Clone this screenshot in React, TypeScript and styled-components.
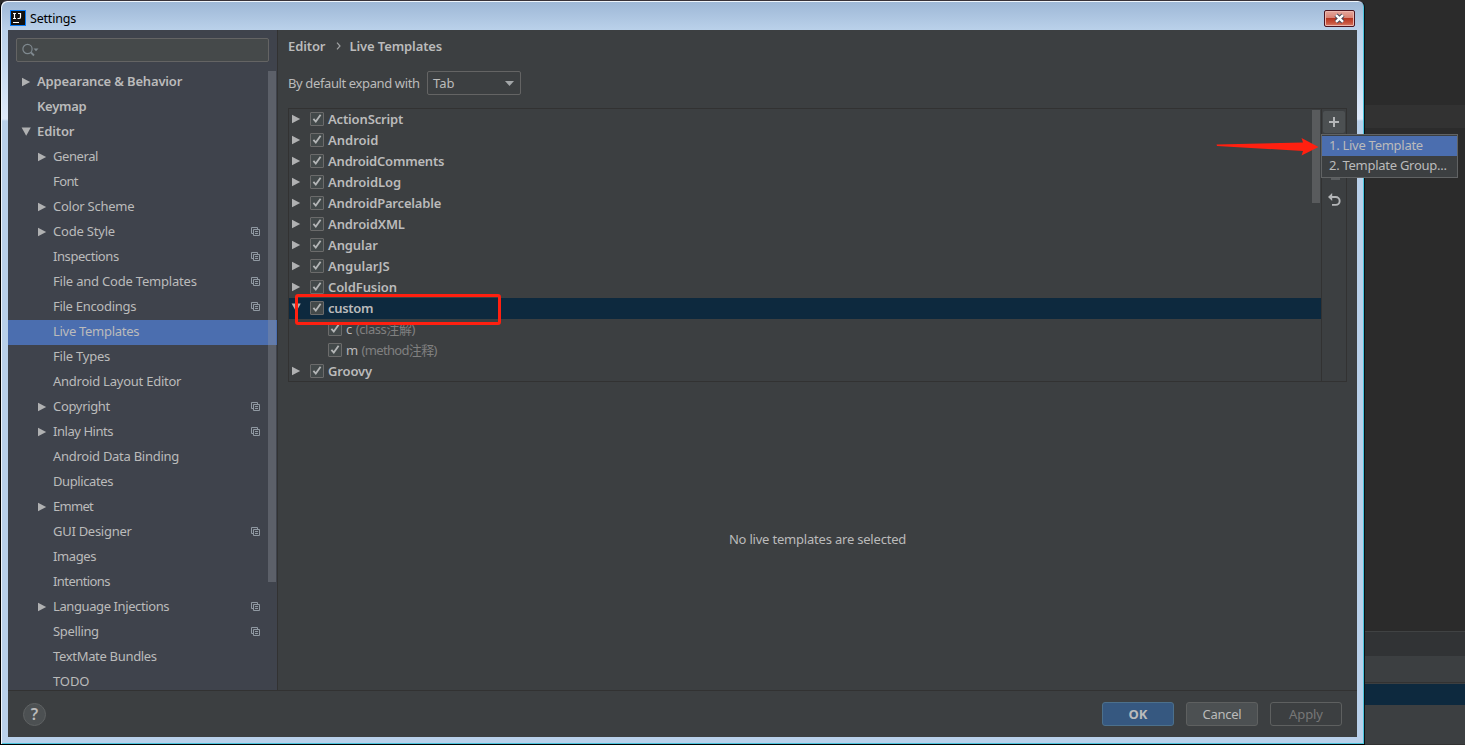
import React from "react";
import styled, { createGlobalStyle, css } from "styled-components";

const Global = createGlobalStyle`
  *, *::before, *::after { box-sizing: border-box; }
  html, body { margin: 0; padding: 0; overflow: hidden; background: #2b2b2b; }
  body { font: 13px/20px "Noto Sans", "Noto Sans CJK SC", sans-serif; color: #bbbbbb; }
`;

const Desktop = styled.div`
  width: 1465px;
  height: 745px;
  display: flex;
  position: relative;
  overflow: hidden;
  background: #2b2b2b;
`;

const Window = styled.div`
  width: 1365px;
  height: 745px;
  flex: none;
  display: flex;
  flex-direction: column;
  padding: 0 7px 7px;
  border: 1px solid #000;
  border-right-color: #0a1015;
  border-top-color: #383238;
  border-radius: 7px 7px 0 0;
  background: linear-gradient(#9db7d5 0, #a5bedb 8px, #bad1ea 29px, #bad1ea 30px, #c4d8ee 60px, #dfeafa 118px, #b9d0ea 120px);
  box-shadow: inset 1px 1px 0 #eff5fb, inset -1px -1px 0 #4ac4dd;
`;

const TitleBar = styled.div`
  height: 29px;
  flex: none;
  display: flex;
  align-items: center;
  padding: 5px 2px 0 2px;
  gap: 4px;
  color: #000;
  font: 12.5px/20px "Noto Sans", sans-serif;
`;

const TitleText = styled.span`
  flex: 1;
  padding-top: 2px;
  letter-spacing: -0.2px;
`;

const CloseButton = styled.div`
  width: 31px;
  height: 17px;
  margin-top: 1px;
  display: flex;
  align-items: center;
  justify-content: center;
  border: 1px solid #4b1420;
  border-radius: 2px;
  background: linear-gradient(#e5a79d 0, #d98375 45%, #b73622 50%, #c8553e 80%, #d9806c 100%);
  box-shadow: inset 0 0 0 1px #edb7ae;
`;

const Body = styled.div`
  flex: 1;
  min-height: 0;
  display: flex;
  background: #3c3f41;
`;

const Sidebar = styled.div`
  width: 270px;
  flex: none;
  display: flex;
  flex-direction: column;
  background: #3f434c;
  border-right: 1px solid #323232;
  overflow: hidden;
`;

const Search = styled.div`
  height: 24px;
  flex: none;
  margin: 8px 8px;
  padding-left: 5px;
  display: flex;
  align-items: center;
  border: 1px solid #646464;
  border-radius: 2px;
  background: #45494a;
`;

const Tree = styled.div`
  flex: 1;
  min-height: 0;
  overflow: hidden;
  position: relative;
`;

const ScrollThumb = styled.div<{ $top: number; $height: number; $color: string }>`
  position: absolute;
  top: ${(p) => p.$top}px;
  right: 1px;
  width: 8px;
  height: ${(p) => p.$height}px;
  background: ${(p) => p.$color};
`;

const TreeRow = styled.div<{ $level: number; $selected?: boolean }>`
  height: 25px;
  display: flex;
  align-items: center;
  padding: 0 17px 2px ${(p) => 13 + p.$level * 16}px;
  ${(p) => p.$selected && css`background: #4b6eaf;`}
`;

const ArrowSlot = styled.span`
  width: 16px;
  flex: none;
  display: flex;
`;

const Label = styled.span<{ $bold?: boolean; $spacing?: number }>`
  flex: 1;
  white-space: nowrap;
  font-weight: ${(p) => (p.$bold ? 600 : 400)};
  letter-spacing: ${(p) => p.$spacing ?? 0}px;
`;

const TreeLabel = styled(Label)`
  padding-bottom: 1px;
`;

const Main = styled.div`
  flex: 1;
  min-width: 0;
  display: flex;
  flex-direction: column;
  padding: 0 10px;
`;

const Breadcrumb = styled.div`
  height: 20px;
  margin-top: 6px;
  display: flex;
  align-items: center;
  font-weight: 600;
  letter-spacing: -0.1px;
`;

const Chevron = styled.svg`
  margin: 0 8px 0 11px;
`;

const ExpandRow = styled.div`
  height: 24px;
  margin-top: 15px;
  display: flex;
  align-items: center;
`;

const ExpandText = styled.span`
  width: 139px;
  white-space: nowrap;
  letter-spacing: -0.38px;
`;

const Select = styled.div`
  width: 94px;
  height: 24px;
  display: flex;
  align-items: center;
  justify-content: space-between;
  padding: 0 6px 0 5px;
  border: 1px solid #646464;
  border-radius: 2px;
`;

const TemplatePanel = styled.div`
  height: 274px;
  margin-top: 13px;
  display: flex;
  border: 1px solid #323232;
`;

const TemplateList = styled.div`
  flex: 1;
  position: relative;
  overflow: hidden;
`;

const TemplateRow = styled.div<{ $level: number; $selected?: boolean }>`
  height: 21px;
  display: flex;
  align-items: center;
  padding: 0 0 1px ${(p) => 2 + p.$level * 18}px;
  ${(p) => p.$selected && css`background: #0d293e;`}
`;

const Check = styled.span`
  width: 14px;
  height: 14px;
  flex: none;
  margin: 0 4px 0 3px;
  display: flex;
  border: 1px solid #6b6b6b;
  border-radius: 1px;
  background: #43494a;
`;

const Hint = styled.span`
  color: #808080;
  margin-left: 4px;
`;

const SideTools = styled.div`
  width: 25px;
  border-left: 1px solid #323232;
  display: flex;
  flex-direction: column;
  align-items: center;
  gap: 4px;
  padding-top: 2px;
`;

const Tool = styled.div<{ $active?: boolean }>`
  width: 22px;
  height: 22px;
  display: flex;
  align-items: center;
  justify-content: center;
  border-radius: 2px;
  background: ${(p) => (p.$active ? "#4c5052" : "transparent")};
`;

const Empty = styled.div`
  flex: 1;
  display: flex;
  align-items: center;
  justify-content: center;
  padding-top: 6px;
  letter-spacing: -0.2px;
`;

const Footer = styled.div`
  height: 47px;
  flex: none;
  display: flex;
  align-items: center;
  padding: 0 15px;
  gap: 12px;
  background: #3c3f41;
  border-top: 1px solid #323232;
`;

const Help = styled.div`
  width: 23px;
  height: 23px;
  display: flex;
  align-items: center;
  justify-content: center;
  margin-right: auto;
  border: 1px solid #5e6162;
  border-radius: 50%;
  background: #4c5052;
  font-size: 16px;
  font-weight: 600;
`;

const buttonKinds = {
  primary: css`background: #365880; border-color: #4c708c; font-weight: 700;`,
  normal: css`background: #4c5052; border-color: #5e6060; letter-spacing: -0.25px;`,
  disabled: css`background: transparent; border-color: #5e6060; color: #777777; letter-spacing: -0.1px;`,
};

const Button = styled.div<{ $kind: keyof typeof buttonKinds }>`
  width: 72px;
  height: 24px;
  display: flex;
  align-items: center;
  justify-content: center;
  border: 1px solid;
  border-radius: 3px;
  ${(p) => buttonKinds[p.$kind]}
`;

const Backdrop = styled.div`
  flex: 1;
  display: flex;
  flex-direction: column;
`;

const Band = styled.div<{ $h: number; $bg: string }>`
  height: ${(p) => p.$h}px;
  flex: none;
  background: ${(p) => p.$bg};
`;

const Popup = styled.div`
  position: absolute;
  left: 1321px;
  top: 134px;
  width: 137px;
  height: 44px;
  padding-top: 1px;
  border: 1px solid #616364;
  background: #3c3f41;
`;

const PopupItem = styled.div<{ $active?: boolean }>`
  height: 20px;
  padding-left: 7px;
  line-height: 18px;
  white-space: nowrap;
  letter-spacing: -0.27px;
  background: ${(p) => (p.$active ? "#4b6eaf" : "transparent")};
`;

const Highlight = styled.div`
  position: absolute;
  left: 295px;
  top: 294px;
  width: 206px;
  height: 31px;
  border: 3px solid #ff2010;
  border-radius: 3px;
`;

const Pointer = styled.svg`
  position: absolute;
  left: 1216px;
  top: 137px;
`;

function Arrow({ open }: { open?: boolean }) {
  return (
    <svg width="10" height="10" viewBox="0 0 10 10" fill="#b0b1b2">
      <path d={open ? "M0.6 0.6H9.8L5.2 8.8Z" : "M1 0.8V9.2L9.2 5Z"} />
    </svg>
  );
}

function CopyIcon() {
  return (
    <svg width="9" height="9" viewBox="0 0 9 9" fill="none" stroke="#9099a2" strokeWidth="1">
      <path d="M2 6.5H0.5V0.5H6.5V2M2.5 2.5H8.5V8.5H2.5ZM4 4.5H7M4 6.5H7" />
    </svg>
  );
}

function Checkbox() {
  return (
    <Check>
      <svg width="12" height="12" viewBox="0 0 12 12" fill="none" stroke="#b4b6b7" strokeWidth="1.8">
        <path d="M2.4 5.8L4.8 8.6L9.6 1.8" />
      </svg>
    </Check>
  );
}

type Item = { text: string; level: number; arrow?: "open" | "closed"; copy?: boolean; bold?: boolean; selected?: boolean; spacing?: number };

const items: Item[] = [
  { text: "Appearance & Behavior", level: 0, arrow: "closed", bold: true, spacing: -0.16 },
  { text: "Keymap", level: 0, bold: true, spacing: -0.3 },
  { text: "Editor", level: 0, arrow: "open", bold: true, spacing: -0.1 },
  { text: "General", level: 1, arrow: "closed", spacing: -0.42 },
  { text: "Font", level: 1, spacing: -0.6 },
  { text: "Color Scheme", level: 1, arrow: "closed", spacing: -0.25 },
  { text: "Code Style", level: 1, arrow: "closed", copy: true, spacing: -0.2 },
  { text: "Inspections", level: 1, copy: true, spacing: -0.43 },
  { text: "File and Code Templates", level: 1, copy: true, spacing: -0.2 },
  { text: "File Encodings", level: 1, copy: true, spacing: -0.29 },
  { text: "Live Templates", level: 1, selected: true, spacing: -0.29 },
  { text: "File Types", level: 1, spacing: -0.22 },
  { text: "Android Layout Editor", level: 1, spacing: -0.24 },
  { text: "Copyright", level: 1, arrow: "closed", copy: true, spacing: -0.33 },
  { text: "Inlay Hints", level: 1, arrow: "closed", copy: true, spacing: -0.45 },
  { text: "Android Data Binding", level: 1, spacing: -0.27 },
  { text: "Duplicates", level: 1, spacing: -0.4 },
  { text: "Emmet", level: 1, arrow: "closed", spacing: -0.7 },
  { text: "GUI Designer", level: 1, copy: true, spacing: -0.28 },
  { text: "Images", level: 1, spacing: -0.4 },
  { text: "Intentions", level: 1, spacing: -0.57 },
  { text: "Language Injections", level: 1, arrow: "closed", copy: true, spacing: -0.4 },
  { text: "Spelling", level: 1, copy: true, spacing: -0.35 },
  { text: "TextMate Bundles", level: 1, spacing: -0.32 },
  { text: "TODO", level: 1, spacing: -0.1 },
];

type Template = { text: string; hint?: string; open?: boolean; spacing?: number };

const templates: Template[] = [
  { text: "ActionScript", spacing: -0.15 },
  { text: "Android" },
  { text: "AndroidComments", spacing: -0.2 },
  { text: "AndroidLog", spacing: -0.05 },
  { text: "AndroidParcelable", spacing: -0.18 },
  { text: "AndroidXML", spacing: -0.1 },
  { text: "Angular", spacing: -0.1 },
  { text: "AngularJS" },
  { text: "ColdFusion", spacing: -0.1 },
  { text: "custom", open: true, spacing: -0.3 },
  { text: "c", hint: "(class注解)", spacing: -0.45 },
  { text: "m", hint: "(method注释)", spacing: -0.66 },
  { text: "Groovy", spacing: -0.15 },
];

export default function App() {
  return (
    <Desktop>
      <Global />
      <Window>
        <TitleBar>
          <svg width="16" height="16" viewBox="0 0 16 16">
            <rect x="0.5" y="0.5" width="15" height="15" fill="#111" stroke="#087cfa" />
            <path d="M3 3.5H6M4.5 3.5V8M3 8.5H6M8 3.5H10.5V7.2Q10.5 8.5 9 8.5H7.5" fill="none" stroke="#fff" strokeWidth="1.2" />
            <path d="M3 12.5H9" stroke="#fff" />
          </svg>
          <TitleText>Settings</TitleText>
          <CloseButton>
            <svg width="13" height="11" viewBox="0 0 13 11" fill="none">
              <path d="M3 2.2L10 8.8M10 2.2L3 8.8" stroke="#4a4a5a" strokeWidth="4.4" />
              <path d="M3 2.2L10 8.8M10 2.2L3 8.8" stroke="#fff" strokeWidth="2.4" />
            </svg>
          </CloseButton>
        </TitleBar>
        <Body>
          <Sidebar>
            <Search>
              <svg width="18" height="14" viewBox="0 0 18 14" fill="none" stroke="#7f898f" strokeWidth="1.2">
                <circle cx="5.5" cy="6" r="4.6" />
                <path d="M9 9.5L12 12.5" strokeWidth="1.8" />
                <path d="M11.5 5.5H16.5L14 8.3Z" fill="#7f898f" stroke="none" />
              </svg>
            </Search>
            <Tree>
              {items.map((it) => (
                <TreeRow key={it.text} $level={it.level} $selected={it.selected}>
                  <ArrowSlot>{it.arrow && <Arrow open={it.arrow === "open"} />}</ArrowSlot>
                  <TreeLabel $bold={it.bold} $spacing={it.spacing}>{it.text}</TreeLabel>
                  {it.copy && <CopyIcon />}
                </TreeRow>
              ))}
              <ScrollThumb $top={1} $height={511} $color="rgba(150, 152, 160, 0.34)" />
            </Tree>
          </Sidebar>
          <Main>
            <Breadcrumb>
              Editor
              <Chevron width="5" height="8" viewBox="0 0 5 8" fill="none" stroke="#a0a2a3" strokeWidth="1.2">
                <path d="M1 0.7L4 4L1 7.3" />
              </Chevron>
              Live Templates
            </Breadcrumb>
            <ExpandRow>
              <ExpandText>By default expand with</ExpandText>
              <Select>
                Tab
                <svg width="9" height="5" viewBox="0 0 9 5" fill="#a3a6a8"><path d="M0 0H9L4.5 5Z" /></svg>
              </Select>
            </ExpandRow>
            <TemplatePanel>
              <TemplateList>
                {templates.map((t) => (
                  <TemplateRow key={t.text} $level={t.hint ? 1 : 0} $selected={t.open}>
                    <ArrowSlot>{!t.hint && <Arrow open={t.open} />}</ArrowSlot>
                    <Checkbox />
                    <Label $bold={!t.hint} $spacing={t.spacing}>
                      {t.text}
                      {t.hint && <Hint>{t.hint}</Hint>}
                    </Label>
                  </TemplateRow>
                ))}
                <ScrollThumb $top={1} $height={93} $color="#595b5d" />
              </TemplateList>
              <SideTools>
                <Tool $active>
                  <svg width="10" height="10" viewBox="0 0 10 10" stroke="#b4b6b8" strokeWidth="2"><path d="M5 0V10M0 5H10" /></svg>
                </Tool>
                <Tool />
                <Tool>
                  <svg width="12" height="14" viewBox="0 0 12 14" fill="#5a5d5f"><path d="M3 2H12V13H3Z" /></svg>
                </Tool>
                <Tool>
                  <svg width="14" height="14" viewBox="0 0 14 14" fill="none" stroke="#b4b6b8" strokeWidth="1.9">
                    <path d="M3 4H8.7A3.9 3.9 0 0 1 8.7 11.9H5" />
                    <path d="M5.2 0V8L1 4Z" fill="#b4b6b8" stroke="none" />
                  </svg>
                </Tool>
              </SideTools>
            </TemplatePanel>
            <Empty>No live templates are selected</Empty>
          </Main>
        </Body>
        <Footer>
          <Help>?</Help>
          <Button $kind="primary">OK</Button>
          <Button $kind="normal">Cancel</Button>
          <Button $kind="disabled">Apply</Button>
        </Footer>
      </Window>
      <Backdrop>
        <Band $h={105} $bg="#2b2b2b" />
        <Band $h={23} $bg="#323232" />
        <Band $h={503} $bg="#2b2b2b" />
        <Band $h={1} $bg="#404243" />
        <Band $h={24} $bg="#313335" />
        <Band $h={26} $bg="#3c3f41" />
        <Band $h={1} $bg="#323232" />
        <Band $h={1} $bg="#3c3f41" />
        <Band $h={21} $bg="#0d293e" />
        <Band $h={39} $bg="#3c3f41" />
        <Band $h={1} $bg="#323232" />
      </Backdrop>
      <Popup>
        <PopupItem $active>1. Live Template</PopupItem>
        <PopupItem>2. Template Group...</PopupItem>
      </Popup>
      <Highlight />
      <Pointer width="104" height="20" viewBox="0 0 104 20" fill="#ff2010">
        <path d="M0.5 7.6L87 5.5L85.5 1L102.5 10L85.5 18.5L87 14L1 9Z" />
      </Pointer>
    </Desktop>
  );
}
